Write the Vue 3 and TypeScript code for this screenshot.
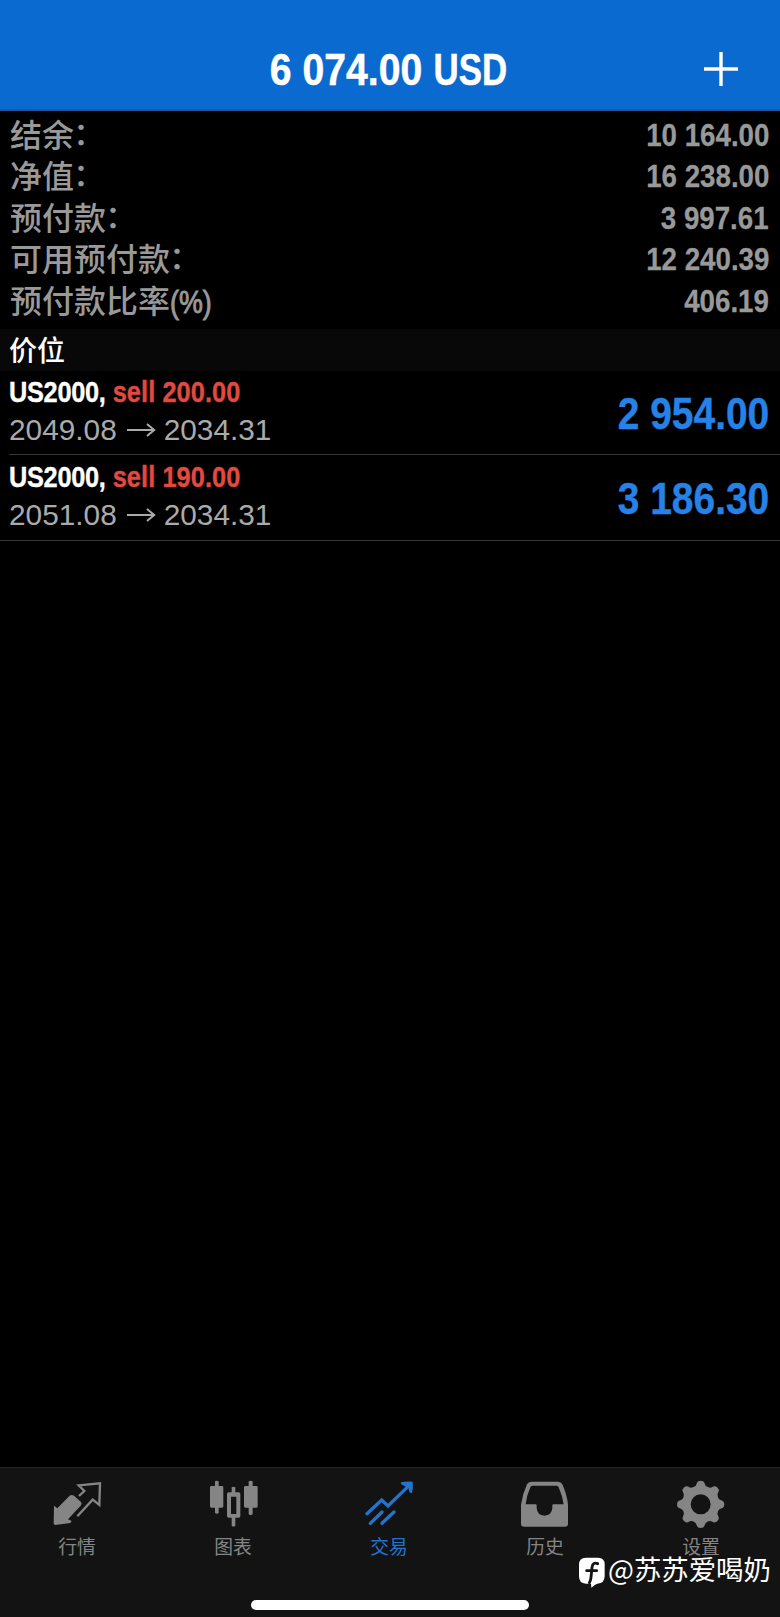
<script setup lang="ts">
interface Metric { label: string; suffix?: string; value: string }
interface Position { symbol: string; side: string; open: string; current: string; profit: string }
interface Tab { id: string; label: string; viewBox: string }

const metrics: Metric[] = [
  { label: '结余', value: '10 164.00' },
  { label: '净值', value: '16 238.00' },
  { label: '预付款', value: '3 997.61' },
  { label: '可用预付款', value: '12 240.39' },
  { label: '预付款比率', suffix: '(%)', value: '406.19' },
]

const positions: Position[] = [
  { symbol: 'US2000,', side: 'sell 200.00', open: '2049.08', current: '2034.31', profit: '2 954.00' },
  { symbol: 'US2000,', side: 'sell 190.00', open: '2051.08', current: '2034.31', profit: '3 186.30' },
]

const tabs: Tab[] = [
  { id: 'quotes', label: '行情', viewBox: '69 58 150 150' },
  { id: 'chart', label: '图表', viewBox: '537 58 150 150' },
  { id: 'trade', label: '交易', viewBox: '75 58 150 150' },
  { id: 'history', label: '历史', viewBox: '543 58 150 150' },
  { id: 'settings', label: '设置', viewBox: '351 58 150 150' },
]
const active = 'trade'
const teeth = [0, 45, 90, 135, 180, 225, 270, 315]
</script>

<template>
  <div class="screen">
    <header class="bar">
      <h1 class="title">6 074.00 <span class="currency">USD</span></h1>
      <svg class="plus" viewBox="0 0 34 34"><path d="M17 0V34M0 17H34" /></svg>
    </header>

    <section class="metrics">
      <div v-for="m in metrics" :key="m.label" class="metric">
        <span class="label">{{ m.label }}<span v-if="m.suffix" class="suffix">{{ m.suffix }}</span><span v-else class="colon">：</span></span>
        <span class="value">{{ m.value }}</span>
      </div>
    </section>

    <h2 class="section">价位</h2>

    <ul class="positions">
      <li v-for="p in positions" :key="p.open" class="position">
        <div class="info">
          <div class="name"><span class="symbol">{{ p.symbol }}</span> <span class="side">{{ p.side }}</span></div>
          <div class="prices">
            <span>{{ p.open }}</span>
            <svg class="arrow" viewBox="0 0 30 16"><path d="M1 8H28M21 2L28.2 8L21 14" /></svg>
            <span>{{ p.current }}</span>
          </div>
        </div>
        <div class="profit">{{ p.profit }}</div>
      </li>
    </ul>

    <nav class="tabs">
      <div v-for="t in tabs" :key="t.id" class="tab" :class="{ active: t.id === active }">
        <svg class="icon" :viewBox="t.viewBox">
          <g v-if="t.id === 'quotes'">
            <path class="fill" d="M72 138L82 146L118 109Q125 103 133 109L153 127Q157 132 152 138L114 179L125 184L121 190L75 196Q71 195 71 190Z" />
            <path class="line thin" d="M147 109L163 94L146 77L210 71L208 136L188 120L142 170" />
          </g>
          <g v-else-if="t.id === 'chart'">
            <path class="fill" d="M555 65Q560 61 566 65V79H576Q580 79 580 83V140Q580 144 576 144H566V160Q560 165 555 160V144H544Q540 144 540 140V83Q540 79 544 79H555Z" />
            <path class="fill" d="M656 65Q662 61 668 65V79H679Q683 79 683 83V140Q683 144 679 144H668V164Q662 169 656 164V144H646Q642 144 642 140V83Q642 79 646 79H656Z" />
            <path class="fill" fill-rule="evenodd" d="M605 83Q611 79 616 83V98H626Q631 98 631 103V169Q631 174 626 174H616V198Q611 203 605 198V174H596Q591 174 591 169V103Q591 98 596 98H605ZM603 111V163H619V111Z" />
          </g>
          <g v-else-if="t.id === 'trade'">
            <path class="line" d="M81 162L125 121L144 139L207 78" />
            <path class="fill" d="M183 68Q200 64 218 66Q220 84 216 99Q211 102 208 96L205 84L186 75Q180 72 183 68Z" />
            <path class="line" d="M91 191L126 157M126 191L162 157" />
          </g>
          <g v-else-if="t.id === 'history'">
            <path class="fill" fill-rule="evenodd" d="M574 66H654Q663 66 667 74Q681 105 684 135V192Q684 201 675 201H552Q543 201 543 192V135Q547 105 561 74Q565 66 574 66ZM577 78Q573 78 571 83Q560 108 557 134H588Q590 134 590 138V146Q592 167 613 168Q635 167 637 146V138Q637 134 640 134H671Q667 108 656 83Q654 78 650 78Z" />
          </g>
          <g v-else>
            <path v-for="a in teeth" :key="a" class="fill" :transform="`rotate(${a} 422 134)`" d="M402 82Q408 80 411 69Q413 63 422 63Q431 63 433 69Q436 80 442 82V96H402Z" />
            <path class="fill" fill-rule="evenodd" d="M366 134a56 56 0 1 0 112 0a56 56 0 1 0 -112 0ZM392 134a30 30 0 1 1 60 0a30 30 0 1 1 -60 0Z" />
          </g>
        </svg>
        <span class="caption">{{ t.label }}</span>
      </div>
      <div class="home"></div>
    </nav>

    <div class="credit">
      <svg class="mark" viewBox="57 289 78 93">
        <path fill="#fff" d="M78 291H114Q134 291 134 311V346Q134 368 112 369Q106 370 94 381L93 369H78Q57 369 57 347V312Q57 291 78 291Z" />
        <path class="f" d="M113 309Q98 303 96 320L93 350Q92 360 88 366M80 330H110" />
      </svg>
      <span>@苏苏爱喝奶</span>
    </div>
  </div>
</template>

<style>
html, body { margin: 0; background: #000; }
</style>

<style scoped>
.screen {
  position: relative;
  display: flex;
  flex-direction: column;
  width: 780px;
  height: 1617px;
  overflow: hidden;
  background: #000;
  font-family: "Liberation Sans", "Noto Sans CJK SC", sans-serif;
}
.bar {
  display: grid;
  grid-template-columns: 1fr auto 1fr;
  box-sizing: border-box;
  height: 111px;
  padding-top: 30px;
  align-items: center;
  background: #0a6ad0;
  border-bottom: 2px solid #1f579b;
  flex: none;
}
.title {
  grid-column: 2;
  margin: 0;
  color: #fff;
  font-size: 44px;
  line-height: 80px;
  font-weight: 700;
  white-space: nowrap;
  transform: scaleX(.89);
  -webkit-text-stroke: .5px #fff;
}
.currency { display: inline-block; margin-right: -7px; transform: scaleX(.89); transform-origin: left; }
.plus { justify-self: end; width: 34px; height: 34px; margin: -3px 42px 0 0; }
.plus path { fill: none; stroke: #fff; stroke-width: 3.4; }

.metrics { padding: 4px 11px 0 10px; height: 214px; color: #999; flex: none; }
.metric { display: flex; justify-content: space-between; height: 41.4px; line-height: 41.4px; }
.label { margin-top: -2px; font-family: "Noto Sans CJK SC", sans-serif; font-size: 32px; font-weight: 500; white-space: nowrap; }
.colon { display: inline-block; transform: translate(-1px, -2px); }
.suffix {
  display: inline-block;
  width: 41px;
  font-family: "Liberation Sans", sans-serif;
  font-size: 30.5px;
  font-weight: 400;
  transform: scaleX(.88);
  transform-origin: left;
  -webkit-text-stroke: .9px #999;
}
.value { font-size: 32px; font-weight: 700; transform: scaleX(.865); transform-origin: right; -webkit-text-stroke: .3px #999; }

.section {
  margin: 0;
  padding-left: 9px;
  height: 42px;
  line-height: 40px;
  color: #fff;
  background: #080808;
  font-family: "Noto Sans CJK SC", sans-serif;
  font-size: 28px;
  font-weight: 500;
  flex: none;
}
.positions { margin: 0; padding: 0; list-style: none; }
.position {
  display: flex;
  justify-content: space-between;
  align-items: center;
  box-sizing: border-box;
  height: 84px;
  margin-left: 9px;
  padding-right: 11px;
  border-bottom: 1px solid #363636;
}
.position:last-child { margin-left: 0; padding-left: 9px; height: 86px; }
.info { margin-top: -3px; }
.name {
  color: #fff;
  font-size: 30px;
  line-height: 38px;
  font-weight: 700;
  white-space: nowrap;
  transform: scaleX(.845);
  transform-origin: left;
  -webkit-text-stroke: .4px currentColor;
}
.symbol { letter-spacing: -.35px; }
.side { color: #e2493f; letter-spacing: .1px; }
.prices { display: flex; align-items: center; color: #aaa; font-size: 29.8px; line-height: 38px; }
.arrow { width: 30px; height: 16px; margin: 0 8px 0 9px; }
.arrow path { fill: none; stroke: #aaa; stroke-width: 2; }
.profit {
  color: #2682e6;
  font-size: 44px;
  font-weight: 700;
  line-height: 80px;
  padding-top: 2px;
  transform: scaleX(.885);
  transform-origin: right;
  -webkit-text-stroke: .4px #2682e6;
}

.tabs {
  position: relative;
  display: grid;
  grid-template-columns: repeat(5, 1fr);
  box-sizing: border-box;
  height: 150px;
  margin-top: auto;
  padding-top: 11px;
  background: #131313;
  border-top: 1px solid #242424;
  flex: none;
}
.tab { display: flex; flex-direction: column; align-items: center; color: #858585; }
.tab.active { color: #2274cf; }
.icon { width: 50px; height: 50px; }
.fill { fill: currentColor; }
.line { fill: none; stroke: currentColor; stroke-width: 10; stroke-linecap: round; stroke-linejoin: miter; }
.line.thin { stroke-width: 7; stroke-linecap: butt; }
.caption { margin: 4px 2px 0 0; font-family: "Noto Sans CJK SC", sans-serif; font-size: 18.8px; line-height: 26px; }
.home {
  position: absolute;
  left: 251px;
  bottom: 7px;
  width: 278px;
  height: 10px;
  border-radius: 5px;
  background: #fff;
}
.credit {
  position: absolute;
  left: 579px;
  top: 1548px;
  display: flex;
  align-items: center;
  color: #fff;
  font-family: "Noto Sans CJK SC", sans-serif;
  font-size: 27.4px;
  line-height: 38px;
  white-space: nowrap;
}
.mark { width: 26px; height: 31px; margin: 9px 3px 0 0; }
.f { fill: none; stroke: #131313; stroke-width: 8.5; stroke-linecap: round; }
</style>
